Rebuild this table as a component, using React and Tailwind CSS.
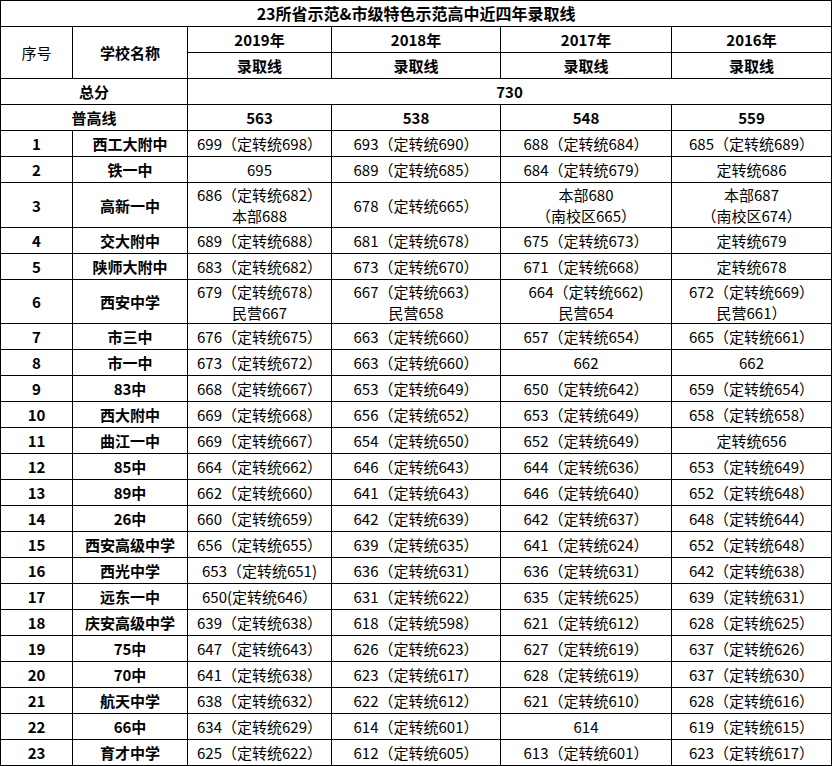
import React from "react";

const years = ["2019年", "2018年", "2017年", "2016年"];
const lines = ["563", "538", "548", "559"];

const rows = [
  ["1", "西工大附中", ["699（定转统698）"], ["693（定转统690）"], ["688（定转统684）"], ["685（定转统689）"]],
  ["2", "铁一中", ["695"], ["689（定转统685）"], ["684（定转统679）"], ["定转统686"]],
  ["3", "高新一中", ["686（定转统682）", "本部688"], ["678（定转统665）"], ["本部680", "（南校区665）"], ["本部687", "（南校区674）"]],
  ["4", "交大附中", ["689（定转统688）"], ["681（定转统678）"], ["675（定转统673）"], ["定转统679"]],
  ["5", "陕师大附中", ["683（定转统682）"], ["673（定转统670）"], ["671（定转统668）"], ["定转统678"]],
  ["6", "西安中学", ["679（定转统678）", "民营667"], ["667（定转统663）", "民营658"], ["664（定转统662)", "民营654"], ["672（定转统669）", "民营661）"]],
  ["7", "市三中", ["676（定转统675）"], ["663（定转统660）"], ["657（定转统654）"], ["665（定转统661）"]],
  ["8", "市一中", ["673（定转统672）"], ["663（定转统660）"], ["662"], ["662"]],
  ["9", "83中", ["668（定转统667）"], ["653（定转统649）"], ["650（定转统642）"], ["659（定转统654）"]],
  ["10", "西大附中", ["669（定转统668）"], ["656（定转统652）"], ["653（定转统649）"], ["658（定转统658）"]],
  ["11", "曲江一中", ["669（定转统667）"], ["654（定转统650）"], ["652（定转统649）"], ["定转统656"]],
  ["12", "85中", ["664（定转统662）"], ["646（定转统643）"], ["644（定转统636）"], ["653（定转统649）"]],
  ["13", "89中", ["662（定转统660）"], ["641（定转统643）"], ["646（定转统640）"], ["652（定转统648）"]],
  ["14", "26中", ["660（定转统659）"], ["642（定转统639）"], ["642（定转统637）"], ["648（定转统644）"]],
  ["15", "西安高级中学", ["656（定转统655）"], ["639（定转统635）"], ["641（定转统624）"], ["652（定转统648）"]],
  ["16", "西光中学", ["653（定转统651)"], ["636（定转统631）"], ["636（定转统631）"], ["642（定转统638）"]],
  ["17", "远东一中", ["650(定转统646）"], ["631（定转统622）"], ["635（定转统625）"], ["639（定转统631）"]],
  ["18", "庆安高级中学", ["639（定转统638）"], ["618（定转统598）"], ["621（定转统612）"], ["628（定转统625）"]],
  ["19", "75中", ["647（定转统643）"], ["626（定转统623）"], ["627（定转统619）"], ["637（定转统626）"]],
  ["20", "70中", ["641（定转统638）"], ["623（定转统617）"], ["628（定转统619）"], ["637（定转统630）"]],
  ["21", "航天中学", ["638（定转统632）"], ["622（定转统612）"], ["621（定转统610）"], ["628（定转统616）"]],
  ["22", "66中", ["634（定转统629）"], ["614（定转统601）"], ["614"], ["619（定转统615）"]],
  ["23", "育才中学", ["625（定转统622）"], ["612（定转统605）"], ["613（定转统601）"], ["623（定转统617）"]],
];

const cell = "border border-black p-0 text-center align-middle";

export default function App() {
  return (
    <div
      className="w-[832px] h-[766px] bg-white text-black text-[15px] leading-[21px]"
      style={{ fontFamily: '"Noto Sans CJK SC", "Noto Sans", sans-serif' }}
    >
      <table className="table-fixed border-collapse w-[831px]">
        <colgroup>
          <col className="w-[72px]" />
          <col className="w-[115px]" />
          <col className="w-[144px]" />
          <col className="w-[169px]" />
          <col className="w-[171px]" />
          <col className="w-[160px]" />
        </colgroup>
        <tbody>
          <tr className="h-[26px]">
            <td colSpan={6} className={`${cell} font-bold text-[16px]`}>
              23所省示范&amp;市级特色示范高中近四年录取线
            </td>
          </tr>
          <tr className="h-[26px]">
            <td rowSpan={2} className={cell}>序号</td>
            <td rowSpan={2} className={`${cell} font-semibold`}>学校名称</td>
            {years.map((y) => (
              <td key={y} className={`${cell} font-bold`}>{y}</td>
            ))}
          </tr>
          <tr className="h-[26px]">
            {years.map((y) => (
              <td key={y} className={`${cell} font-semibold`}>录取线</td>
            ))}
          </tr>
          <tr className="h-[26px]">
            <td colSpan={2} className={`${cell} font-bold`}>总分</td>
            <td colSpan={4} className={`${cell} font-bold`}>730</td>
          </tr>
          <tr className="h-[26px]">
            <td colSpan={2} className={`${cell} font-bold`}>普高线</td>
            {lines.map((l) => (
              <td key={l} className={`${cell} font-bold`}>{l}</td>
            ))}
          </tr>
          {rows.map(([no, name, ...scores]) => {
            const tall = scores.some((s) => s.length > 1);
            return (
              <tr key={no} className={tall ? (no === "3" ? "h-[45px]" : "h-[44px]") : "h-[26px]"}>
                <td className={`${cell} font-bold`}>{no}</td>
                <td className={`${cell} font-bold`}>{name}</td>
                {scores.map((s, i) => (
                  <td key={i} className={cell}>
                    {s.map((t) => (
                      <div key={t}>{t}</div>
                    ))}
                  </td>
                ))}
              </tr>
            );
          })}
        </tbody>
      </table>
    </div>
  );
}
